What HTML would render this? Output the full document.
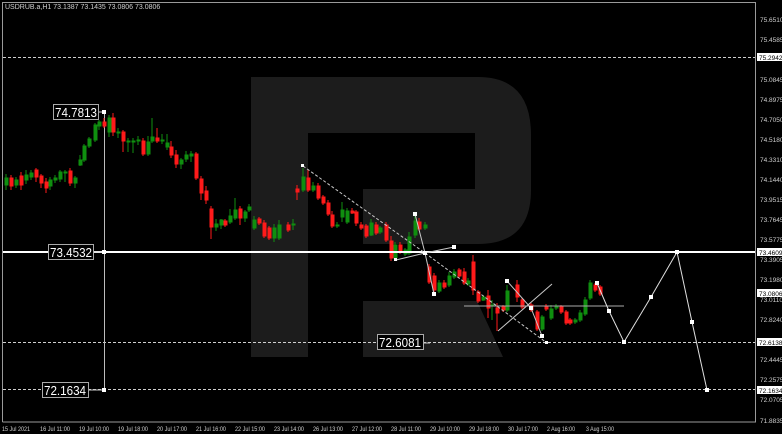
<!DOCTYPE html>
<html><head><meta charset="utf-8"><style>
html,body{margin:0;padding:0;background:#000;}
body{width:782px;height:434px;overflow:hidden;}
svg{display:block;}
text{font-family:"Liberation Sans",sans-serif;}
</style></head><body>
<svg width="782" height="434" viewBox="0 0 782 434" xmlns="http://www.w3.org/2000/svg">
<rect width="782" height="434" fill="#000"/>
<path d="M251,77 H478 Q531,77 531,135 V190 Q531,244 478,244 H363 V189 H475 V133 H308 V357 H251 Z M363,301 H477 L503,357 H363 Z" fill="#1c1c1c"/>
<path d="M2.5,422 V2.5 H755.5 V422 H2.5" fill="none" stroke="#9a9a9a" stroke-width="1"/>
<text x="5" y="9" font-size="7" fill="#d0d0d0">USDRUB.a,H1  73.1387 73.1435 73.0806 73.0806</text>
<g stroke="#cfcfcf" stroke-width="1" stroke-dasharray="3,2">
<line x1="3" y1="57.5" x2="755" y2="57.5"/>
<line x1="3" y1="342.5" x2="755" y2="342.5"/>
<line x1="3" y1="389.5" x2="755" y2="389.5"/>
</g>
<line x1="104.5" y1="112" x2="104.5" y2="390" stroke="#bdbdbd"/>
<!-- left candles (shifted) -->
<g transform="translate(0,100)">
<g fill="#ff1a1a" stroke="#ff1a1a">
<path d="M11,75V90M21,72V90M36,68V82M41,74V88M46,78V93M70,68V86M104,18V28M113,13V36M123,30V52M143,38V56M157,28V43M171,41V58M176,50V68M196,52V80M201,76V100M206,86V104M211,106V139M225,119V127M240,106V125M259,117V125M264,120V138M269,126V140M288,122V132" stroke-width="1" fill="none"/>
<rect x="10" y="78" width="3" height="8"/><rect x="20" y="76" width="3" height="9"/><rect x="35" y="70" width="3" height="7"/><rect x="40" y="76" width="3" height="7"/><rect x="45" y="82" width="3" height="6"/><rect x="69" y="71" width="3" height="12"/><rect x="103" y="22" width="3" height="4"/><rect x="112" y="18" width="3" height="14"/><rect x="122" y="32" width="3" height="9"/><rect x="142" y="41" width="3" height="13"/><rect x="156" y="38" width="3" height="3"/><rect x="170" y="47" width="3" height="8"/><rect x="175" y="55" width="3" height="9"/><rect x="195" y="54" width="3" height="24"/><rect x="200" y="79" width="3" height="14"/><rect x="205" y="91" width="3" height="9"/><rect x="210" y="109" width="3" height="18"/><rect x="224" y="121" width="3" height="4"/><rect x="239" y="109" width="3" height="9"/><rect x="258" y="119" width="3" height="4"/><rect x="263" y="123" width="3" height="13"/><rect x="268" y="128" width="3" height="10"/><rect x="287" y="125" width="3" height="5"/>
</g>
<g fill="#0f8f0f" stroke="#0f8f0f">
<path d="M6,74V90M16,77V88M26,70V84M31,70V80M50,77V90M55,75V83M60,70V82M65,70V82M75,76V88M80,55V66M84,44V62M89,37V48M95,23V42M99,20V30M109,15V37M118,28V38M128,38V52M133,38V53M138,36V45M148,36V56M152,18V43M162,34V44M167,34V50M181,58V69M186,51V62M191,51V62M216,119V131M221,119V129M230,109V124M235,98V120M245,110V122M249,104V112M254,116V130M274,124V142M279,120V140M293,119V130" stroke-width="1" fill="none"/>
<rect x="5" y="78" width="3" height="7"/><rect x="15" y="80" width="3" height="5"/><rect x="25" y="75" width="3" height="5"/><rect x="30" y="73" width="3" height="4"/><rect x="49" y="80" width="3" height="6"/><rect x="54" y="78" width="3" height="2"/><rect x="59" y="72" width="3" height="7"/><rect x="64" y="72" width="3" height="1"/><rect x="74" y="78" width="3" height="5"/><rect x="79" y="60" width="3" height="5"/><rect x="83" y="46" width="3" height="14"/><rect x="88" y="39" width="3" height="7"/><rect x="94" y="25" width="3" height="15"/><rect x="98" y="22" width="3" height="4"/><rect x="108" y="18" width="3" height="14"/><rect x="117" y="32" width="3" height="1"/><rect x="127" y="41" width="3" height="1"/><rect x="132" y="41" width="3" height="1"/><rect x="137" y="40" width="3" height="1"/><rect x="147" y="42" width="3" height="12"/><rect x="151" y="37" width="3" height="4"/><rect x="161" y="40" width="3" height="1"/><rect x="166" y="43" width="3" height="4"/><rect x="180" y="60" width="3" height="4"/><rect x="185" y="55" width="3" height="4"/><rect x="190" y="54" width="3" height="2"/><rect x="215" y="124" width="3" height="3"/><rect x="220" y="120" width="3" height="5"/><rect x="229" y="116" width="3" height="6"/><rect x="234" y="110" width="3" height="8"/><rect x="244" y="112" width="3" height="6"/><rect x="248" y="107" width="3" height="3"/><rect x="253" y="120" width="3" height="8"/><rect x="273" y="128" width="3" height="10"/><rect x="278" y="125" width="3" height="13"/><rect x="292" y="124" width="3" height="1"/>
</g>
</g>
<!-- right candles -->
<g fill="#ff1a1a" stroke="#ff1a1a">
<path d="M297,185V200M308,170V192M318,183V200M323,195V205M328,200V216M332,211V228M352,208V214M356,210V226M361,222V230M366,224V238M376,222V235M386,222V242M391,236V261M400,242V254M419,218V231M429,264V284M434,273V296M444,280V289M459,268V278M464,268V285M473,255V295M478,290V303M488,290V318M497,303V331M503,305V312M517,280V302M522,298V309M531,303V312M537,310V331M546,304V311M561,305V314M566,310V325M570,318V325M595,283V292M600,285V296" stroke-width="1" fill="none"/>
<rect x="296" y="189" width="3" height="3"/><rect x="307" y="178" width="3" height="12"/><rect x="317" y="186" width="3" height="12"/><rect x="322" y="197" width="3" height="6"/><rect x="327" y="203" width="3" height="11"/><rect x="331" y="215" width="3" height="11"/><rect x="351" y="211" width="3" height="2"/><rect x="355" y="212" width="3" height="11"/><rect x="360" y="225" width="3" height="3"/><rect x="365" y="226" width="3" height="10"/><rect x="375" y="225" width="3" height="8"/><rect x="385" y="225" width="3" height="15"/><rect x="390" y="241" width="3" height="17"/><rect x="399" y="245" width="3" height="7"/><rect x="418" y="222" width="3" height="7"/><rect x="428" y="267" width="3" height="15"/><rect x="433" y="276" width="3" height="14"/><rect x="443" y="283" width="3" height="4"/><rect x="458" y="270" width="3" height="6"/><rect x="463" y="272" width="3" height="11"/><rect x="472" y="262" width="3" height="28"/><rect x="477" y="292" width="3" height="9"/><rect x="487" y="296" width="3" height="12"/><rect x="496" y="308" width="3" height="5"/><rect x="502" y="307" width="3" height="3"/><rect x="516" y="285" width="3" height="12"/><rect x="521" y="300" width="3" height="7"/><rect x="530" y="305" width="3" height="5"/><rect x="536" y="312" width="3" height="17"/><rect x="545" y="306" width="3" height="3"/><rect x="560" y="307" width="3" height="5"/><rect x="565" y="312" width="3" height="11"/><rect x="569" y="320" width="3" height="3"/><rect x="594" y="285" width="3" height="5"/><rect x="599" y="287" width="3" height="7"/>
</g>
<g fill="#0f8f0f" stroke="#0f8f0f">
<path d="M303,168V192M313,182V192M337,222V228M342,202V222M347,208V224M371,219V236M380,226V234M395,242V260M405,248V256M409,232V255M415,214V238M425,222V230M439,280V293M449,272V287M454,269V279M468,278V286M483,295V301M492,300V320M507,285V312M542,315V331M551,305V320M556,304V310M575,318V324M580,310V322M585,297V316M590,280V300" stroke-width="1" fill="none"/>
<rect x="302" y="177" width="3" height="13"/><rect x="312" y="186" width="3" height="4"/><rect x="336" y="225" width="3" height="1"/><rect x="341" y="210" width="3" height="7"/><rect x="346" y="211" width="3" height="11"/><rect x="370" y="223" width="3" height="12"/><rect x="379" y="228" width="3" height="4"/><rect x="394" y="245" width="3" height="13"/><rect x="404" y="250" width="3" height="4"/><rect x="408" y="237" width="3" height="16"/><rect x="414" y="221" width="3" height="14"/><rect x="424" y="225" width="3" height="3"/><rect x="438" y="283" width="3" height="8"/><rect x="448" y="276" width="3" height="9"/><rect x="453" y="272" width="3" height="5"/><rect x="467" y="281" width="3" height="3"/><rect x="482" y="297" width="3" height="3"/><rect x="491" y="305" width="3" height="1"/><rect x="506" y="291" width="3" height="19"/><rect x="541" y="317" width="3" height="12"/><rect x="550" y="309" width="3" height="9"/><rect x="555" y="306" width="3" height="2"/><rect x="574" y="320" width="3" height="2"/><rect x="579" y="313" width="3" height="7"/><rect x="584" y="300" width="3" height="14"/><rect x="589" y="283" width="3" height="15"/>
</g>
<line x1="3" y1="252" x2="755" y2="252" stroke="#fff" stroke-width="2"/>
<g fill="none" stroke="#c8c8c8" stroke-width="1">
<path d="M303,166 L425,253 L547,343" stroke-dasharray="3,2"/>
<path d="M415,214 L425,253 L434,294"/>
<path d="M396,260 L425,253 L454,247"/>
<path d="M507,281 L531,308 L542,336"/>
<path d="M498,331 L552,284"/>
<path d="M464,306 H624" stroke="#aaa"/>
<path d="M597,283 L609,311 L624,342 L651,297 L677,252 L692,322 L707,390" stroke="#e0e0e0"/>
<path d="M98,112 H104 M93,252 H104 M88,390 H104 M423,343 H430"/>
</g>
<g fill="#fff">
<rect x="102" y="110" width="4" height="4"/><rect x="102" y="250" width="4" height="4"/><rect x="102" y="388" width="4" height="4"/>
<rect x="301" y="164" width="3" height="3"/><rect x="413" y="212" width="4" height="4"/><rect x="423" y="251" width="4" height="4"/><rect x="394" y="258" width="3" height="3"/><rect x="452" y="245" width="4" height="4"/><rect x="432" y="292" width="4" height="4"/>
<rect x="505" y="279" width="4" height="4"/><rect x="529" y="306" width="4" height="4"/><rect x="540" y="334" width="4" height="4"/><rect x="545" y="341" width="3" height="3"/>
<rect x="595" y="281" width="4" height="4"/><rect x="607" y="309" width="4" height="4"/><rect x="622" y="340" width="4" height="4"/><rect x="649" y="295" width="4" height="4"/><rect x="675" y="250" width="4" height="4"/><rect x="690" y="320" width="4" height="4"/><rect x="705" y="388" width="4" height="4"/>
</g>
<g font-size="13" fill="#fff" stroke="none">
<rect x="53.5" y="104.5" width="45" height="15" fill="#000" stroke="#aaa"/><text x="55" y="117" textLength="42" lengthAdjust="spacingAndGlyphs">74.7813</text>
<rect x="48.5" y="244.5" width="45" height="15" fill="#000" stroke="#aaa"/><text x="50" y="257" textLength="42" lengthAdjust="spacingAndGlyphs">73.4532</text>
<rect x="42.5" y="382.5" width="46" height="15" fill="#000" stroke="#aaa"/><text x="44" y="395" textLength="42" lengthAdjust="spacingAndGlyphs">72.1634</text>
<rect x="377.5" y="334.5" width="46" height="15" fill="#000" stroke="#aaa"/><text x="379" y="347" textLength="42" lengthAdjust="spacingAndGlyphs">72.6081</text>
</g>
<g font-size="6.5" fill="#cfcfcf">
<text x="760" y="22">75.6510</text><text x="760" y="42">75.4585</text>
<text x="760" y="82">75.0845</text><text x="760" y="102">74.8975</text><text x="760" y="122">74.7050</text><text x="760" y="142">74.5180</text><text x="760" y="162">74.3310</text><text x="760" y="182">74.1440</text><text x="760" y="202">73.9515</text><text x="760" y="222">73.7645</text><text x="760" y="242">73.5775</text><text x="760" y="262">73.3905</text><text x="760" y="282">73.1980</text><text x="760" y="302">73.0110</text><text x="760" y="322">72.8240</text><text x="760" y="362">72.4445</text><text x="760" y="382">72.2575</text><text x="760" y="402">72.0705</text><text x="760" y="423">71.8835</text>
</g>
<g font-size="6.5">
<rect x="757" y="53" width="25" height="8" fill="#fff"/><text x="759" y="60" fill="#000">75.2942</text>
<rect x="757" y="248" width="25" height="8" fill="#fff"/><text x="759" y="255" fill="#000">73.4609</text>
<rect x="757" y="289" width="25" height="8" fill="#fff"/><text x="759" y="296" fill="#000">73.0806</text>
<rect x="757" y="338" width="25" height="8" fill="#fff"/><text x="759" y="345" fill="#000">72.6138</text>
<rect x="757" y="386" width="25" height="8" fill="#fff"/><text x="759" y="393" fill="#000">72.1634</text>
</g>
<g font-size="6" fill="#cfcfcf" lengthAdjust="spacingAndGlyphs">
<text x="2" y="431" textLength="28" lengthAdjust="spacingAndGlyphs">15 Jul 2021</text><text x="40" y="431" textLength="30" lengthAdjust="spacingAndGlyphs">16 Jul 11:00</text><text x="79" y="431" textLength="30" lengthAdjust="spacingAndGlyphs">19 Jul 10:00</text><text x="118" y="431" textLength="30" lengthAdjust="spacingAndGlyphs">19 Jul 18:00</text><text x="157" y="431" textLength="30" lengthAdjust="spacingAndGlyphs">20 Jul 17:00</text><text x="196" y="431" textLength="30" lengthAdjust="spacingAndGlyphs">21 Jul 16:00</text><text x="235" y="431" textLength="30" lengthAdjust="spacingAndGlyphs">22 Jul 15:00</text><text x="274" y="431" textLength="30" lengthAdjust="spacingAndGlyphs">23 Jul 14:00</text><text x="313" y="431" textLength="30" lengthAdjust="spacingAndGlyphs">26 Jul 13:00</text><text x="352" y="431" textLength="30" lengthAdjust="spacingAndGlyphs">27 Jul 12:00</text><text x="391" y="431" textLength="30" lengthAdjust="spacingAndGlyphs">28 Jul 11:00</text><text x="430" y="431" textLength="30" lengthAdjust="spacingAndGlyphs">29 Jul 10:00</text><text x="469" y="431" textLength="30" lengthAdjust="spacingAndGlyphs">29 Jul 18:00</text><text x="508" y="431" textLength="30" lengthAdjust="spacingAndGlyphs">30 Jul 17:00</text><text x="547" y="431" textLength="28" lengthAdjust="spacingAndGlyphs">2 Aug 16:00</text><text x="586" y="431" textLength="28" lengthAdjust="spacingAndGlyphs">3 Aug 15:00</text>
</g>
</svg>
</body></html>
